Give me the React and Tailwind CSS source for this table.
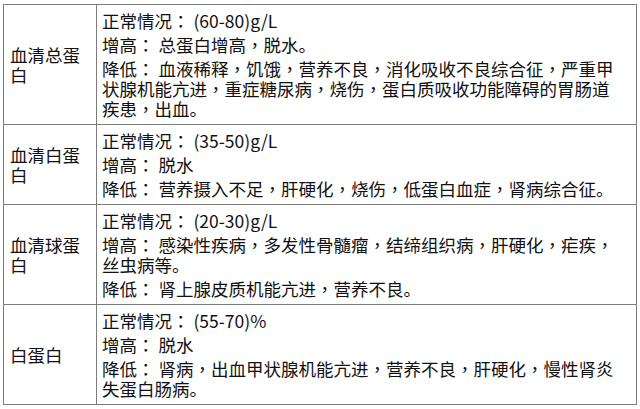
const rows = [
  {
    name: '血清总蛋白',
    lines: [
      '正常情况： (60-80)g/L',
      '增高： 总蛋白增高，脱水。',
      '降低： 血液稀释，饥饿，营养不良，消化吸收不良综合征，严重甲状腺机能亢进，重症糖尿病，烧伤，蛋白质吸收功能障碍的胃肠道疾患，出血。',
    ],
  },
  {
    name: '血清白蛋白',
    lines: [
      '正常情况： (35-50)g/L',
      '增高： 脱水',
      '降低： 营养摄入不足，肝硬化，烧伤，低蛋白血症，肾病综合征。',
    ],
  },
  {
    name: '血清球蛋白',
    lines: [
      '正常情况： (20-30)g/L',
      '增高： 感染性疾病，多发性骨髓瘤，结缔组织病，肝硬化，疟疾，丝虫病等。',
      '降低： 肾上腺皮质机能亢进，营养不良。',
    ],
  },
  {
    name: '白蛋白',
    lines: [
      '正常情况： (55-70)%',
      '增高： 脱水',
      '降低： 肾病，出血甲状腺机能亢进，营养不良，肝硬化，慢性肾炎失蛋白肠病。',
    ],
  },
]

// commas and colons sit centred in the original font, TC glyphs do the same
function Line({ text }) {
  const parts = text.split(/([，：])/)
  return (
    <p>
      {parts.map((p, i) =>
        p === '，' || p === '：'
          ? <span key={i} className="inline-block w-[1em] h-[20px] leading-[20px] align-top" style={{ fontFamily: '"Noto Sans CJK TC", sans-serif' }}>{p}</span>
          : p
      )}
    </p>
  )
}

export default function App() {
  return (
    <div className="w-[640px] h-[409px] bg-white pt-[4px] pl-[3px] overflow-hidden">
      <div
        className="w-[634px] border border-[#7c7c7c] text-[17.5px] text-[#111]"
        style={{ fontFamily: '"Noto Sans CJK SC", sans-serif' }}
      >
        {rows.map((r, i) => (
          <div key={r.name} className={`flex ${i > 0 ? 'border-t border-[#7c7c7c]' : ''}`}>
            <div className="w-[93px] shrink-0 border-r border-[#7c7c7c] flex items-center pl-[6px] pr-[6px] leading-[20px]">
              <span>{r.name}</span>
            </div>
            <div className="flex-1 pl-[5px] pr-[16px] pt-[6px] pb-[5px] flex flex-col gap-[4px] leading-[20px]">
              {r.lines.map(l => (
                <Line key={l} text={l} />
              ))}
            </div>
          </div>
        ))}
      </div>
    </div>
  )
}
